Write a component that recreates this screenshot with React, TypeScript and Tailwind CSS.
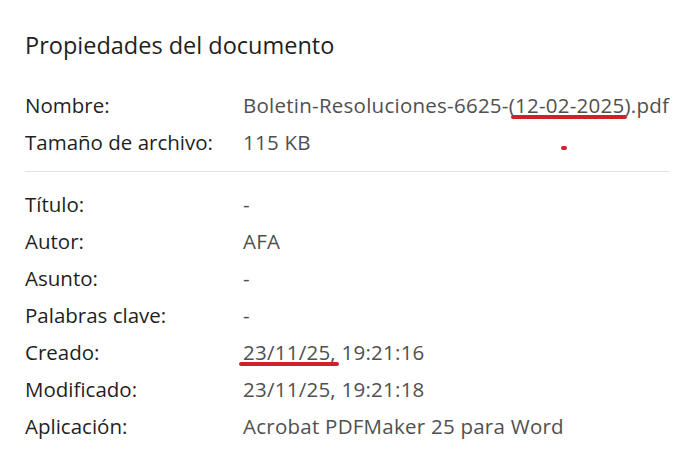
import React from "react";

function Mark({ children }: { children: React.ReactNode }) {
  return (
    <span className="relative inline-block">
      {children}
      <span className="absolute left-[-4px] right-[-3px] top-[calc(100%-4px)] h-[4px] rounded-full bg-[#d11f2b]" />
    </span>
  );
}

function Row({ label, value }: { label: string; value: React.ReactNode }) {
  return (
    <div className="flex h-[37px] items-center">
      <div className="w-[218px] shrink-0 text-[#1f1f1f]">{label}</div>
      <div className="relative tracking-[0.25px] text-[#505050]">{value}</div>
    </div>
  );
}

export default function App() {
  return (
    <div
      className="h-[452px] w-[697px] bg-white pl-[25px] pr-[27px] pt-[29px] text-[20.5px] leading-[28px]"
      style={{ fontFamily: '"Open Sans", "Noto Sans", sans-serif' }}
    >
      <h1 className="text-[23.5px] leading-[32px] text-[#1f1f1f]">Propiedades del documento</h1>
      <div className="mt-[25px]">
        <Row
          label="Nombre:"
          value={
            <span>
              Boletin-Resoluciones-6625-(<Mark>12-02-2025</Mark>).pdf
            </span>
          }
        />
        <Row
          label="Tamaño de archivo:"
          value={
            <span className="relative">
              115 KB
              <span className="absolute left-[318px] top-[18px] h-[4px] w-[6px] rounded-full bg-[#d11f2b]" />
            </span>
          }
        />
      </div>
      <div className="mb-[13px] mt-[11px] h-px bg-[#e3e3e3]" />
      <Row label="Título:" value="-" />
      <Row label="Autor:" value="AFA" />
      <Row label="Asunto:" value="-" />
      <Row label="Palabras clave:" value="-" />
      <Row
        label="Creado:"
        value={
          <span>
            <Mark>23/11/25,</Mark> 19:21:16
          </span>
        }
      />
      <Row label="Modificado:" value="23/11/25, 19:21:18" />
      <Row label="Aplicación:" value="Acrobat PDFMaker 25 para Word" />
    </div>
  );
}
